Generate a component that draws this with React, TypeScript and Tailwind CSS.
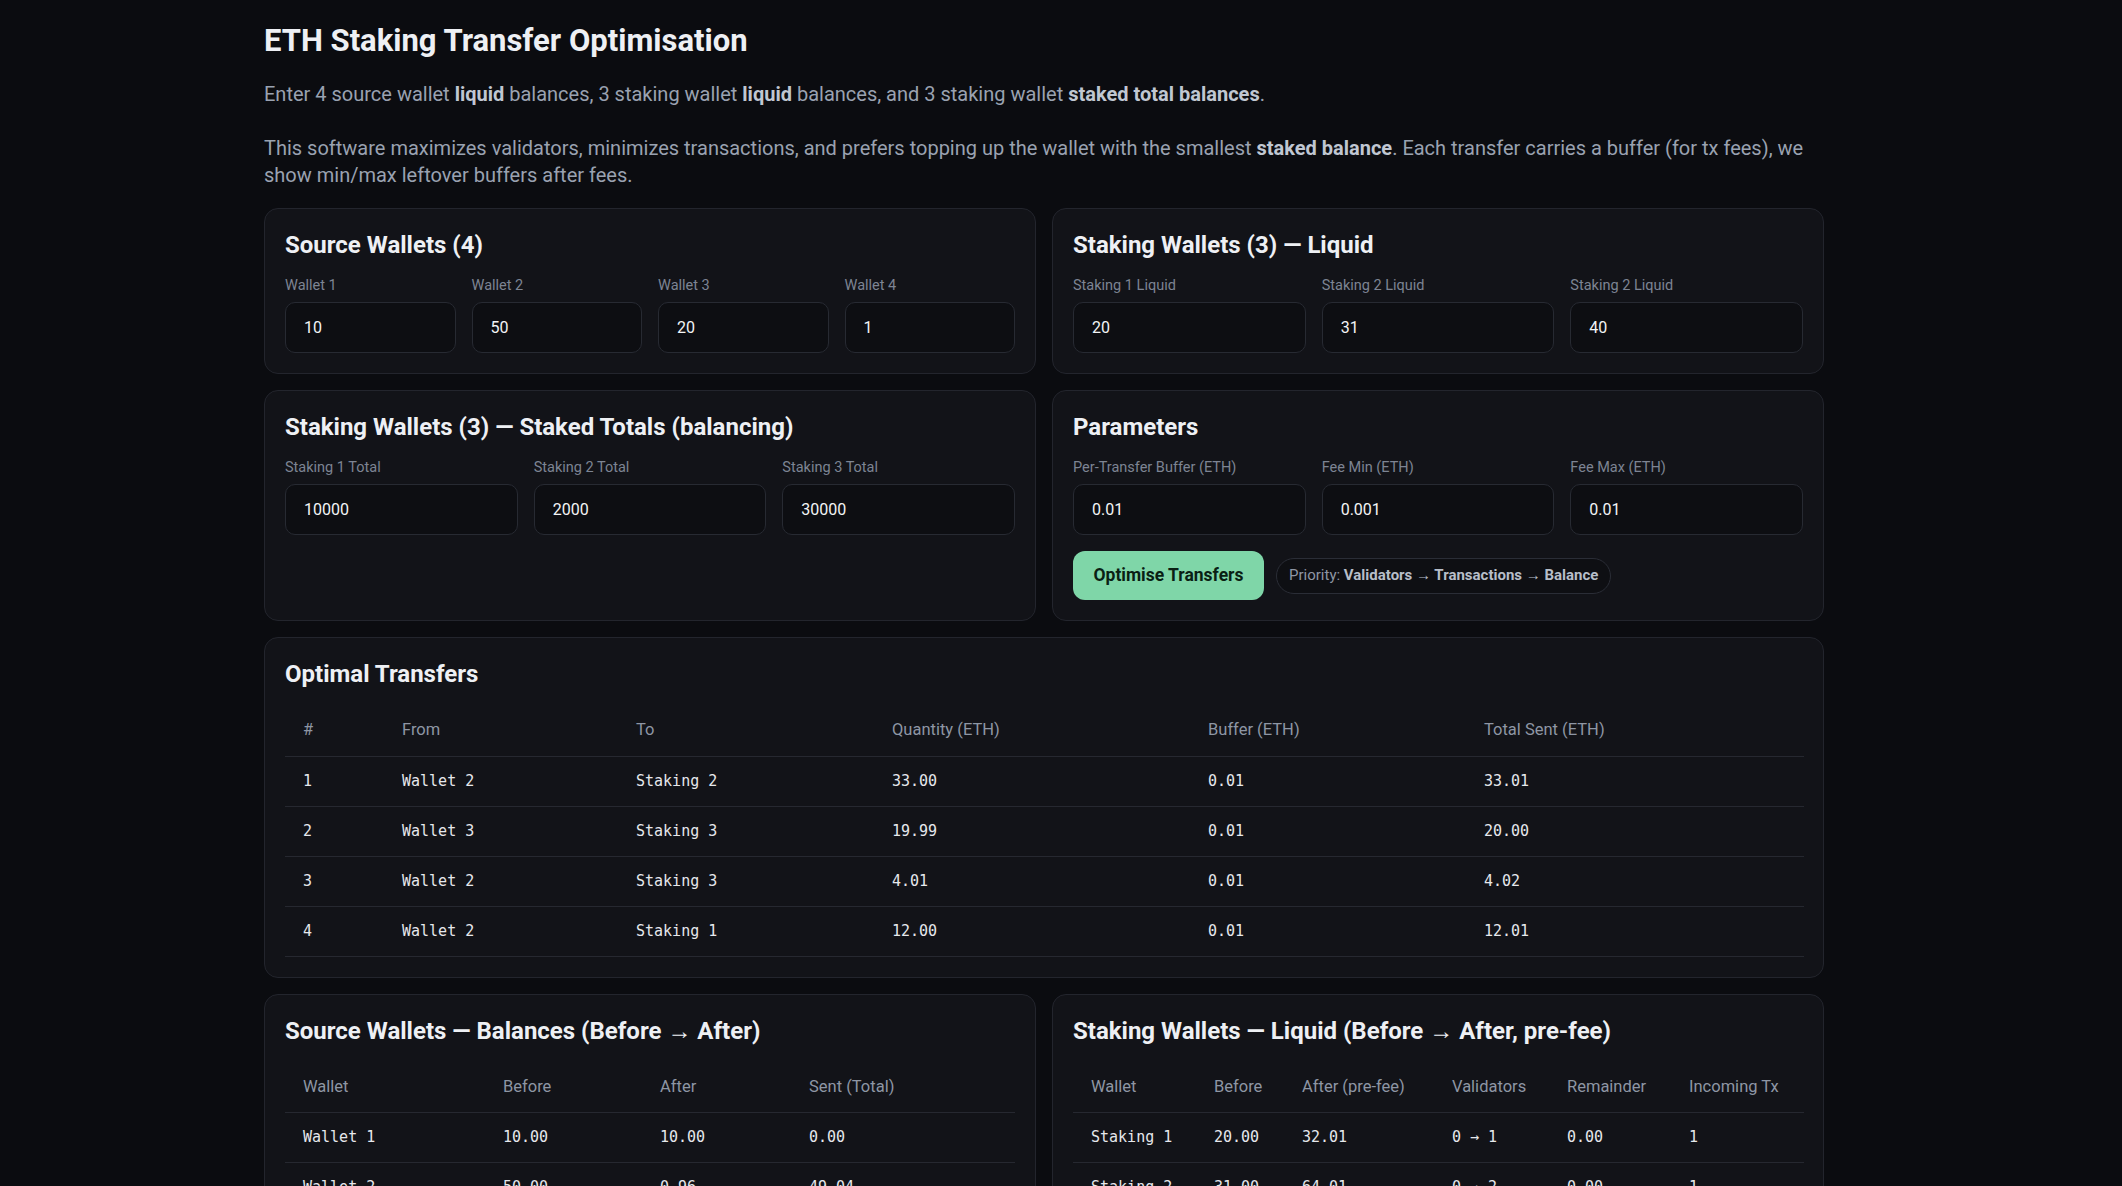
import React from "react";

// ETH staking transfer optimiser — static snapshot of the results page

const sourceWallets = [
  { label: "Wallet 1", value: "10" },
  { label: "Wallet 2", value: "50" },
  { label: "Wallet 3", value: "20" },
  { label: "Wallet 4", value: "1" },
];

const stakingLiquid = [
  { label: "Staking 1 Liquid", value: "20" },
  { label: "Staking 2 Liquid", value: "31" },
  { label: "Staking 2 Liquid", value: "40" },
];

const stakingTotals = [
  { label: "Staking 1 Total", value: "10000" },
  { label: "Staking 2 Total", value: "2000" },
  { label: "Staking 3 Total", value: "30000" },
];

const params = [
  { label: "Per-Transfer Buffer (ETH)", value: "0.01" },
  { label: "Fee Min (ETH)", value: "0.001" },
  { label: "Fee Max (ETH)", value: "0.01" },
];

const transfers = [
  { id: 1, from: "Wallet 2", to: "Staking 2", qty: "33.00", buffer: "0.01", total: "33.01" },
  { id: 2, from: "Wallet 3", to: "Staking 3", qty: "19.99", buffer: "0.01", total: "20.00" },
  { id: 3, from: "Wallet 2", to: "Staking 3", qty: "4.01", buffer: "0.01", total: "4.02" },
  { id: 4, from: "Wallet 2", to: "Staking 1", qty: "12.00", buffer: "0.01", total: "12.01" },
];

const sourceBalances = [
  ["Wallet 1", "10.00", "10.00", "0.00"],
  ["Wallet 2", "50.00", "0.96", "49.04"],
  ["Wallet 3", "20.00", "0.00", "20.00"],
  ["Wallet 4", "1.00", "1.00", "0.00"],
];

const stakingBalances = [
  ["Staking 1", "20.00", "32.01", "0 → 1", "0.00", "1"],
  ["Staking 2", "31.00", "64.01", "0 → 2", "0.00", "1"],
  ["Staking 3", "40.00", "64.01", "1 → 2", "0.00", "2"],
];

const Card: React.FC<{ title: string; children: React.ReactNode; className?: string }> = ({
  title,
  children,
  className = "",
}) => (
  <div className={`rounded-[14px] border border-[#23252d] bg-[#121318] p-5 ${className}`}>
    <h2 className="text-[24px] font-bold leading-[32px] text-[#eef0f4]">{title}</h2>
    {children}
  </div>
);

const Field: React.FC<{ label: string; value: string }> = ({ label, value }) => (
  <label className="block">
    <span className="block text-[14.5px] leading-5 text-[#7d8493]">{label}</span>
    <input
      readOnly
      value={value}
      className="mt-[6px] h-[51px] w-full rounded-[10px] border border-[#272a32] bg-[#0d0e12] px-[18px] text-[16px] text-[#f3f4f6] outline-none"
    />
  </label>
);

const Table: React.FC<{ headers: string[]; widths: string[]; rows: string[][] }> = ({
  headers,
  widths,
  rows,
}) => (
  <table className="mt-4 w-full table-fixed border-collapse">
    <colgroup>
      {widths.map((w, i) => (
        <col key={i} className={w} />
      ))}
    </colgroup>
    <thead>
      <tr className="h-[50px] border-b border-[#262830]">
        {headers.map((h) => (
          <th key={h} className="px-[18px] text-left text-[16.5px] font-normal text-[#8e96a4]">
            {h}
          </th>
        ))}
      </tr>
    </thead>
    <tbody>
      {rows.map((row, r) => (
        <tr key={r} className="h-[50px] border-b border-[#262830]">
          {row.map((cell, c) => (
            <td
              key={c}
              className="whitespace-nowrap px-[18px] font-['DejaVu_Sans_Mono',monospace] text-[15px] text-[#e6e8ec]"
            >
              {cell}
            </td>
          ))}
        </tr>
      ))}
    </tbody>
  </table>
);

export default function App() {
  return (
    <div className="min-h-screen bg-[#0b0c10] pb-10 font-['Roboto','Liberation_Sans',sans-serif] text-[#e6e8ec]">
      <div className="ml-[264px] w-[1560px] pt-[23px]">
        <h1 className="text-[31px] font-bold leading-[36px] text-[#eef0f4]">
          ETH Staking Transfer Optimisation
        </h1>
        <p className="mt-[22px] text-[20px] leading-[27px] text-[#9aa2b1]">
          Enter 4 source wallet <strong className="text-[#c0c7d2]">liquid</strong> balances, 3
          staking wallet <strong className="text-[#c0c7d2]">liquid</strong> balances, and 3 staking
          wallet <strong className="text-[#c0c7d2]">staked total balances</strong>.
        </p>
        <p className="mt-[27px] text-[20px] leading-[27px] text-[#9aa2b1]">
          This software maximizes validators, minimizes transactions, and prefers topping up the
          wallet with the smallest <strong className="text-[#c0c7d2]">staked balance</strong>. Each
          transfer carries a buffer (for tx fees), we show min/max leftover buffers after fees.
        </p>

        <div className="mt-[19px] grid grid-cols-2 gap-4">
          <Card title="Source Wallets (4)">
            <div className="mt-[15px] grid grid-cols-4 gap-4">
              {sourceWallets.map((f) => (
                <Field key={f.label} label={f.label} value={f.value} />
              ))}
            </div>
          </Card>
          <Card title="Staking Wallets (3) — Liquid">
            <div className="mt-[15px] grid grid-cols-3 gap-4">
              {stakingLiquid.map((f, i) => (
                <Field key={i} label={f.label} value={f.value} />
              ))}
            </div>
          </Card>
          <Card title="Staking Wallets (3) — Staked Totals (balancing)">
            <div className="mt-[15px] grid grid-cols-3 gap-4">
              {stakingTotals.map((f) => (
                <Field key={f.label} label={f.label} value={f.value} />
              ))}
            </div>
          </Card>
          <Card title="Parameters">
            <div className="mt-[15px] grid grid-cols-3 gap-4">
              {params.map((f) => (
                <Field key={f.label} label={f.label} value={f.value} />
              ))}
            </div>
            <div className="mt-4 flex items-center gap-3">
              <button className="h-[49px] w-[191px] rounded-[12px] bg-[#7fd6a8] text-[17.5px] font-bold text-[#0a1f14]">
                Optimise Transfers
              </button>
              <span className="flex h-9 items-center rounded-full border border-[#2a2d36] bg-[#0e0f13] px-3 text-[15px] text-[#8e96a4]">
                Priority:&nbsp;
                <strong className="text-[#b7bec9]">Validators → Transactions → Balance</strong>
              </span>
            </div>
          </Card>
        </div>

        <Card title="Optimal Transfers" className="mt-4">
          <Table
            headers={["#", "From", "To", "Quantity (ETH)", "Buffer (ETH)", "Total Sent (ETH)"]}
            widths={["w-[99px]", "w-[234px]", "w-[256px]", "w-[316px]", "w-[276px]", "w-[338px]"]}
            rows={transfers.map((t) => [String(t.id), t.from, t.to, t.qty, t.buffer, t.total])}
          />
        </Card>

        <div className="mt-4 grid grid-cols-2 gap-4">
          <Card title="Source Wallets — Balances (Before → After)">
            <Table
              headers={["Wallet", "Before", "After", "Sent (Total)"]}
              widths={["w-[200px]", "w-[157px]", "w-[149px]", "w-[224px]"]}
              rows={sourceBalances}
            />
          </Card>
          <Card title="Staking Wallets — Liquid (Before → After, pre-fee)">
            <Table
              headers={["Wallet", "Before", "After (pre-fee)", "Validators", "Remainder", "Incoming Tx"]}
              widths={["w-[123px]", "w-[88px]", "w-[150px]", "w-[115px]", "w-[122px]", "w-[133px]"]}
              rows={stakingBalances}
            />
          </Card>
        </div>
      </div>
    </div>
  );
}
